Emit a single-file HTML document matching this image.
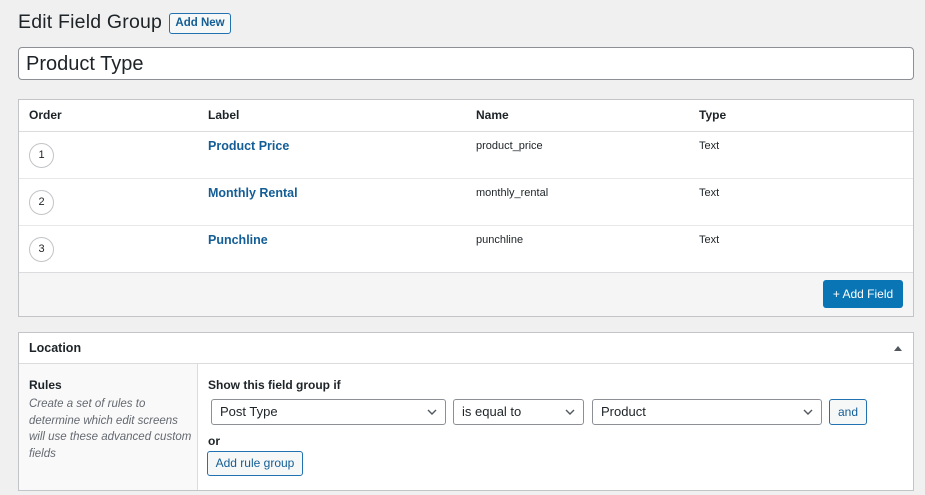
<!DOCTYPE html>
<html><head><style>
*{box-sizing:border-box;margin:0;padding:0}
body{width:925px;height:495px;background:#f0f0f1;font-family:"Liberation Sans",sans-serif;font-size:12px;color:#1d2327;position:relative;overflow:hidden}
.a{position:absolute}
.panel{background:#fff;border:1px solid #c3c4c7}
.b{font-weight:bold}
.link{color:#135e96;font-weight:bold;font-size:12.5px}
.circ{width:25px;height:25px;border:1px solid #c3c4c7;border-radius:50%;text-align:center;line-height:23px;font-size:11px;background:#fff}
.sel{height:26px;border:1px solid #8c8f94;border-radius:3px;background:#fff;font-size:13px;padding:4px 8px;line-height:16px}
.sel svg{position:absolute;right:8px;top:9px}
</style></head><body>
<div class="a" style="left:18px;top:11px;font-size:19.5px;letter-spacing:0.2px;color:#1d2327">Edit Field Group</div>
<div class="a" style="left:169px;top:13px;width:62px;height:21px;border:1px solid #2271b1;border-radius:3px;background:#f6f7f7;color:#135e96;font-weight:bold;font-size:11.5px;text-align:center;line-height:19px">Add New</div>
<div class="a" style="left:18px;top:47px;width:896px;height:33px;background:#fff;border:1px solid #8c8f94;border-radius:4px;font-size:20px;padding:5px 7px">Product Type</div>

<div class="a panel" style="left:18px;top:99px;width:896px;height:218px"></div>
<div class="a" style="left:19px;top:131px;width:894px;height:1px;background:#dcdcde"></div>
<div class="a" style="left:19px;top:178px;width:894px;height:1px;background:#e8e8e8"></div>
<div class="a" style="left:19px;top:225px;width:894px;height:1px;background:#e8e8e8"></div>
<div class="a" style="left:19px;top:272px;width:894px;height:44px;background:#f5f5f5;border-top:1px solid #dcdcde"></div>
<div class="a b" style="left:29px;top:108px">Order</div>
<div class="a b" style="left:208px;top:108px">Label</div>
<div class="a b" style="left:476px;top:108px">Name</div>
<div class="a b" style="left:699px;top:108px">Type</div>

<div class="a circ" style="left:29px;top:143px">1</div>
<div class="a link" style="left:208px;top:139px">Product Price</div>
<div class="a" style="left:476px;top:140px;font-size:11px">product_price</div>
<div class="a" style="left:699px;top:140px;font-size:11px">Text</div>

<div class="a circ" style="left:29px;top:190px">2</div>
<div class="a link" style="left:208px;top:186px">Monthly Rental</div>
<div class="a" style="left:476px;top:187px;font-size:11px">monthly_rental</div>
<div class="a" style="left:699px;top:187px;font-size:11px">Text</div>

<div class="a circ" style="left:29px;top:237px">3</div>
<div class="a link" style="left:208px;top:233px">Punchline</div>
<div class="a" style="left:476px;top:234px;font-size:11px">punchline</div>
<div class="a" style="left:699px;top:234px;font-size:11px">Text</div>

<div class="a" style="left:823px;top:280px;width:80px;height:28px;background:#0a75b4;border-radius:3px;color:#fff;font-size:12px;text-align:center;line-height:28px">+ Add Field</div>

<div class="a panel" style="left:18px;top:332px;width:896px;height:159px"></div>
<div class="a b" style="left:29px;top:341px;font-size:12.5px">Location</div>
<div class="a" style="left:894px;top:346px;width:0;height:0;border-left:4px solid transparent;border-right:4px solid transparent;border-bottom:5px solid #50575e"></div>
<div class="a" style="left:19px;top:363px;width:894px;height:1px;background:#dcdcde"></div>
<div class="a" style="left:19px;top:364px;width:179px;height:126px;background:#f9f9f9;border-right:1px solid #dcdcde"></div>
<div class="a b" style="left:29px;top:378px">Rules</div>
<div class="a" style="left:29px;top:396px;font-style:italic;color:#646970;font-size:11.5px;line-height:16.5px;width:164px">Create a set of rules to determine which edit screens will use these advanced custom fields</div>
<div class="a b" style="left:208px;top:378px">Show this field group if</div>

<div class="a sel" style="left:211px;top:399px;width:235px">Post Type<svg width="10" height="7"><path d="M1 1l4 4 4-4" stroke="#50575e" stroke-width="1.4" fill="none"/></svg></div>
<div class="a sel" style="left:453px;top:399px;width:131px">is equal to<svg width="10" height="7"><path d="M1 1l4 4 4-4" stroke="#50575e" stroke-width="1.4" fill="none"/></svg></div>
<div class="a sel" style="left:592px;top:399px;width:230px">Product<svg width="10" height="7"><path d="M1 1l4 4 4-4" stroke="#50575e" stroke-width="1.4" fill="none"/></svg></div>
<div class="a" style="left:829px;top:399px;width:38px;height:26px;border:1px solid #2271b1;border-radius:3px;background:#f6f7f7;color:#135e96;text-align:center;line-height:24px">and</div>
<div class="a b" style="left:208px;top:434px">or</div>
<div class="a" style="left:207px;top:451px;width:96px;height:25px;border:1px solid #2271b1;border-radius:3px;background:#f6f7f7;color:#135e96;text-align:center;line-height:23px">Add rule group</div>
</body></html>
